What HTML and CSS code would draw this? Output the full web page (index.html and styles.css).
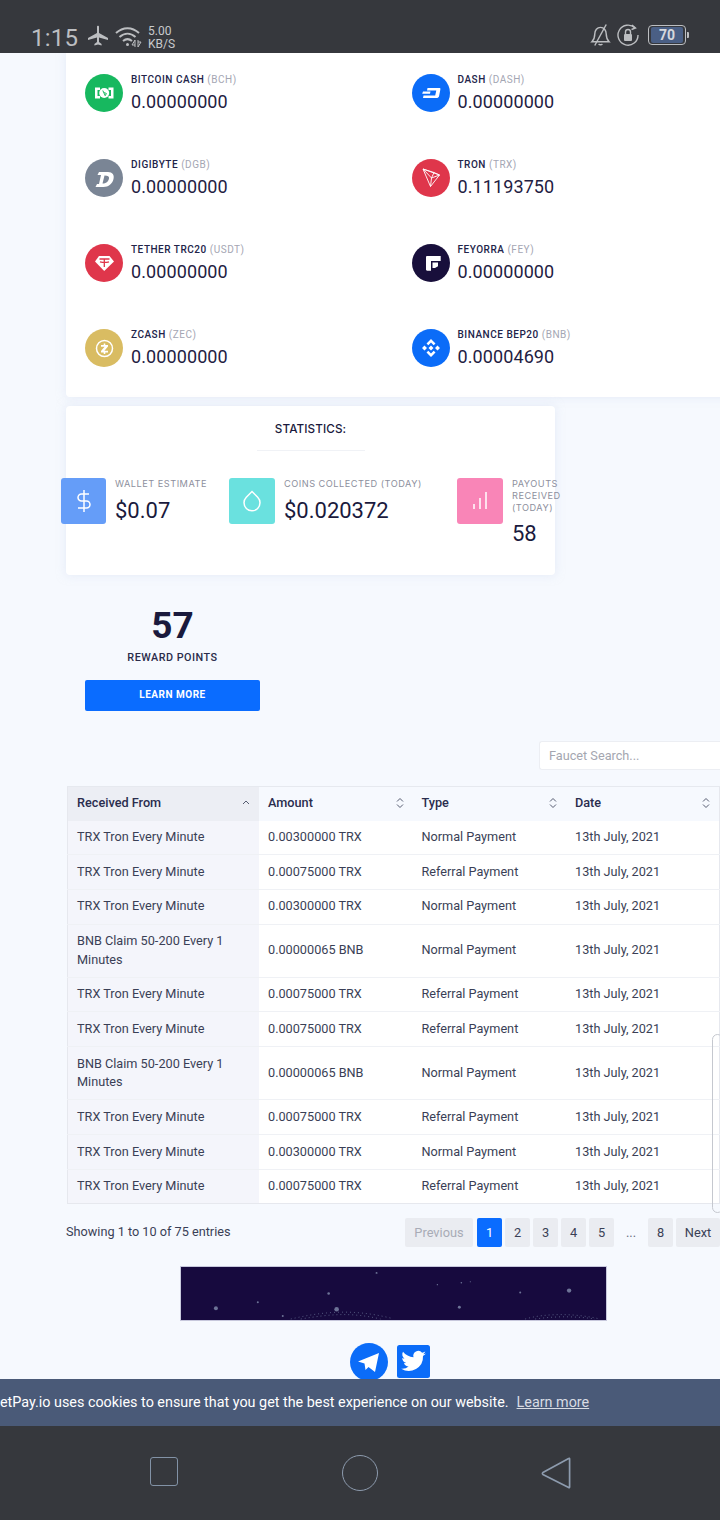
FILE: index.html
```html
<!DOCTYPE html>
<html lang="en">
<head>
    <meta charset="UTF-8">
    <meta name="viewport" content="width=device-width, initial-scale=1.0">
    <title>FaucetPay</title>
    <link rel="stylesheet" href="styles.css">
</head>
<body>
    <div class="status-bar">
        <div class="status-left">
            <span class="clock">1:15</span>
            <svg class="ic-plane" viewBox="0 0 22 22"><path d="M10 1.500c0-1 2-1 2 0V8l9 5v2l-9-2.600V17l2.600 2v1.600L11 19.500l-3.600 1.100V19L10 17v-4.600L1 15v-2l9-5z" fill="#bcbec1"/></svg>
            <svg class="ic-wifi" viewBox="0 0 28 24" fill="none" stroke="#bcbec1" stroke-width="2"><path d="M1 8c7-6.500 16-6.500 23 0"/><path d="M4.500 12c5-4.500 11-4.500 16 0"/><path d="M8 16c3-2.500 6-2.500 9 0"/><circle cx="12.500" cy="19.500" r="1.500" fill="#bcbec1" stroke="none"/><path d="M20 22v-7l-3 5h3M23 15v7l3-5h-3" stroke-width="1"/></svg>
            <span class="speed">5.00<br>KB/S</span>
        </div>
        <div class="status-right">
            <svg class="ic-bell" viewBox="0 0 22 24" fill="none" stroke="#bcbec1" stroke-width="1.500"><path d="M2 19c2-2 3-4 3-8s2.500-7 6-7 6 3 6 7 1 6 3 8z"/><path d="M9 21.500c1 1 3 1 4 0"/><path d="M17 1L5 23"/></svg>
            <svg class="ic-lock" viewBox="0 0 22 24" fill="none" stroke="#bcbec1" stroke-width="1.400"><path d="M18 5a10 10 0 1 0 3 7"/><path d="M15 2l3.500 3-4 1.500"/><rect x="7" y="11" width="8" height="7" rx="1" fill="#bcbec1" stroke="none"/><path d="M8.500 11V9a2.500 2.500 0 0 1 5 0v2"/></svg>
            <div class="battery"><span class="battery-level">70</span></div>
            <span class="battery-tip"></span>
        </div>
    </div>

    <div class="page">
        <div class="card coins">
            <div class="coin">
                <svg class="coin-icon" viewBox="0 0 38 38"><circle cx="19" cy="19" r="19" fill="#17b85f"/><path d="M10 13.500h5v2.500h-2.500v6h2.500v2.500h-5zM28.500 13.500h-5V16H26v6h-2.500v2.500h5z" fill="#fff"/><circle cx="19.200" cy="19" r="5" fill="#fff"/><path d="M17.800 16.500l2.400 5.200 1.200-2.200-2.200-1" fill="none" stroke="#17b85f" stroke-width="1"/></svg>
                <div>
                    <div class="coin-name">BITCOIN CASH <span>(BCH)</span></div>
                    <div class="coin-value">0.00000000</div>
                </div>
            </div>
            <div class="coin">
                <svg class="coin-icon" viewBox="0 0 38 38"><circle cx="19" cy="19" r="19" fill="#0b6cf8"/><path d="M15.500 14h12c.7 0 1 .5.900 1.200l-1.300 6.800c-.2.900-.9 2-2 2H11l.5-2.400h11.700l1.100-5.200H15zM11 17.600h7.500l-.5 2.200h-7.800z" fill="#fff"/></svg>
                <div>
                    <div class="coin-name">DASH <span>(DASH)</span></div>
                    <div class="coin-value">0.00000000</div>
                </div>
            </div>
            <div class="coin">
                <svg class="coin-icon" viewBox="0 0 38 38"><circle cx="19" cy="19" r="19" fill="#7a8595"/><path fill-rule="evenodd" d="M14 13h9c4.500 0 6.500 3 5.500 7-1 4.500-5 8-10 8h-8l1.500-3h2l2-9h-3.500zm5.500 3.500l-2 8c3.500 0 6-2 6.500-5 .4-2-1-3-4.500-3z" fill="#fff"/></svg>
                <div>
                    <div class="coin-name">DIGIBYTE <span>(DGB)</span></div>
                    <div class="coin-value">0.00000000</div>
                </div>
            </div>
            <div class="coin">
                <svg class="coin-icon" viewBox="0 0 38 38"><circle cx="19" cy="19" r="19" fill="#df364b"/><path d="M11 10l16.500 6L18.500 27.500zM11 10l8.500 9-1 8.500M19.500 19l8-3M11 10l11 3.500 5.500 2.500M22 13.500L19.500 19" fill="none" stroke="#fff" stroke-width=".9" stroke-linejoin="round"/></svg>
                <div>
                    <div class="coin-name">TRON <span>(TRX)</span></div>
                    <div class="coin-value">0.11193750</div>
                </div>
            </div>
            <div class="coin">
                <svg class="coin-icon" viewBox="0 0 38 38"><circle cx="19" cy="19" r="19" fill="#df364b"/><path d="M14 12h10.500l4.500 5.500L19.200 27 10 17.500z" fill="#fff"/><path d="M14.500 15h10M19.300 15v8M15 17.800c3 .8 6.500.8 9 0" fill="none" stroke="#df364b" stroke-width="1.300"/></svg>
                <div>
                    <div class="coin-name">TETHER TRC20 <span>(USDT)</span></div>
                    <div class="coin-value">0.00000000</div>
                </div>
            </div>
            <div class="coin">
                <svg class="coin-icon" viewBox="0 0 38 38"><circle cx="19" cy="19" r="19" fill="#180f3b"/><path d="M14 13.200c0-.8.500-1.200 1.200-1.200H28.700v5H19v9.700h-3.800c-.7 0-1.200-.5-1.200-1.200zM20.500 18.500h5.500v3.800l-3 1.800h-2.500z" fill="#fff"/></svg>
                <div>
                    <div class="coin-name">FEYORRA <span>(FEY)</span></div>
                    <div class="coin-value">0.00000000</div>
                </div>
            </div>
            <div class="coin">
                <svg class="coin-icon" viewBox="0 0 38 38"><circle cx="19" cy="19" r="19" fill="#d9bc62"/><circle cx="19.500" cy="19.500" r="8" fill="none" stroke="#fff" stroke-width="1.500"/><path d="M18.700 14.500h1.600v1.500h2.700v1.600l-3.600 4.200H23v1.700h-2.700V25h-1.600v-1.500H16v-1.600l3.600-4.200H16V16h2.700z" fill="#fff"/></svg>
                <div>
                    <div class="coin-name">ZCASH <span>(ZEC)</span></div>
                    <div class="coin-value">0.00000000</div>
                </div>
            </div>
            <div class="coin">
                <svg class="coin-icon" viewBox="0 0 38 38"><circle cx="19" cy="19" r="19" fill="#0b6cf8"/><path d="M19 10l4.500 4.500-1.800 1.800L19 13.600l-2.700 2.700-1.800-1.800zM12.500 16.500L15 19l-2.500 2.500L10 19zM25.500 16.500L28 19l-2.500 2.500L23 19zM19 16.500l2.500 2.500-2.500 2.500-2.500-2.500zM14.500 23.500l1.800-1.800 2.700 2.700 2.700-2.700 1.800 1.800L19 28z" fill="#fff"/></svg>
                <div>
                    <div class="coin-name">BINANCE BEP20 <span>(BNB)</span></div>
                    <div class="coin-value">0.00004690</div>
                </div>
            </div>
        </div>

        <div class="card stats">
            <h3 class="stats-title">STATISTICS:</h3>
            <div class="stats-rule"></div>
            <div class="stats-row">
                <div class="stat">
                    <div class="stat-icon blue">
                        <svg viewBox="0 0 24 24" fill="none" stroke="#fff" stroke-width="1.500"><path d="M12 1v22M17 5H9.500a3.500 3.500 0 0 0 0 7h5a3.500 3.500 0 0 1 0 7H6"/></svg>
                    </div>
                    <div>
                        <div class="stat-label">WALLET ESTIMATE</div>
                        <div class="stat-value">$0.07</div>
                    </div>
                </div>
                <div class="stat">
                    <div class="stat-icon teal">
                        <svg viewBox="0 0 24 24" fill="none" stroke="#fff" stroke-width="1.500"><path d="M12 2.500l5.700 5.700a8 8 0 1 1-11.400 0z"/></svg>
                    </div>
                    <div>
                        <div class="stat-label">COINS COLLECTED (TODAY)</div>
                        <div class="stat-value">$0.020372</div>
                    </div>
                </div>
                <div class="stat">
                    <div class="stat-icon pink">
                        <svg viewBox="0 0 24 24" fill="none" stroke="#fff" stroke-width="1.500"><path d="M6 20v-5M12 20V9M18 20V3"/></svg>
                    </div>
                    <div>
                        <div class="stat-label narrow">PAYOUTS RECEIVED (TODAY)</div>
                        <div class="stat-value spaced">58</div>
                    </div>
                </div>
            </div>
        </div>

        <div class="reward">
            <div class="reward-num">57</div>
            <div class="reward-label">REWARD POINTS</div>
            <a class="reward-btn">LEARN MORE</a>
        </div>

        <div class="search-row">
            <input class="search" type="text" placeholder="Faucet Search...">
        </div>

        <table class="payouts">
            <colgroup><col class="c1"><col class="c2"><col class="c2"><col class="c2"></colgroup>
            <thead>
                <tr>
                    <th class="sorted"><div class="th-in">Received From <svg class="sort" viewBox="0 0 8 12" fill="none" stroke="#555b70"><path d="M1 7l3-3 3 3"/></svg></div></th>
                    <th><div class="th-in">Amount <svg class="sort" viewBox="0 0 8 12" fill="none" stroke="#555b70"><path d="M1 4.500L4 1.500l3 3M1 7.500l3 3 3-3"/></svg></div></th>
                    <th><div class="th-in">Type <svg class="sort" viewBox="0 0 8 12" fill="none" stroke="#555b70"><path d="M1 4.500L4 1.500l3 3M1 7.500l3 3 3-3"/></svg></div></th>
                    <th><div class="th-in">Date <svg class="sort" viewBox="0 0 8 12" fill="none" stroke="#555b70"><path d="M1 4.500L4 1.500l3 3M1 7.500l3 3 3-3"/></svg></div></th>
                </tr>
            </thead>
            <tbody>
                <tr><td>TRX Tron Every Minute</td><td>0.00300000 TRX</td><td>Normal Payment</td><td>13th July, 2021</td></tr>
                <tr><td>TRX Tron Every Minute</td><td>0.00075000 TRX</td><td>Referral Payment</td><td>13th July, 2021</td></tr>
                <tr><td>TRX Tron Every Minute</td><td>0.00300000 TRX</td><td>Normal Payment</td><td>13th July, 2021</td></tr>
                <tr><td>BNB Claim 50-200 Every 1 Minutes</td><td>0.00000065 BNB</td><td>Normal Payment</td><td>13th July, 2021</td></tr>
                <tr><td>TRX Tron Every Minute</td><td>0.00075000 TRX</td><td>Referral Payment</td><td>13th July, 2021</td></tr>
                <tr><td>TRX Tron Every Minute</td><td>0.00075000 TRX</td><td>Referral Payment</td><td>13th July, 2021</td></tr>
                <tr><td>BNB Claim 50-200 Every 1 Minutes</td><td>0.00000065 BNB</td><td>Normal Payment</td><td>13th July, 2021</td></tr>
                <tr><td>TRX Tron Every Minute</td><td>0.00075000 TRX</td><td>Referral Payment</td><td>13th July, 2021</td></tr>
                <tr><td>TRX Tron Every Minute</td><td>0.00300000 TRX</td><td>Normal Payment</td><td>13th July, 2021</td></tr>
                <tr><td>TRX Tron Every Minute</td><td>0.00075000 TRX</td><td>Referral Payment</td><td>13th July, 2021</td></tr>
            </tbody>
        </table>

        <div class="table-foot">
            <div class="entries">Showing 1 to 10 of 75 entries</div>
            <div class="pager">
                <a class="pg prev">Previous</a>
                <a class="pg num active">1</a>
                <a class="pg num">2</a>
                <a class="pg num">3</a>
                <a class="pg num">4</a>
                <a class="pg num">5</a>
                <span class="pg-dots">...</span>
                <a class="pg num">8</a>
                <a class="pg next">Next</a>
            </div>
        </div>

        <svg class="banner" viewBox="0 0 426 54" preserveAspectRatio="none">
            <rect width="426" height="54" fill="#170a3e"/>
            <g fill="#6d7396">
                <circle cx="35" cy="42" r="2"/><circle cx="77" cy="36" r="1"/><circle cx="196" cy="6" r="1"/>
                <circle cx="148" cy="27" r="1.300"/><circle cx="156" cy="43" r="2.300"/><circle cx="257" cy="18" r=".7"/>
                <circle cx="281" cy="16" r=".8"/><circle cx="290" cy="15" r=".6"/><circle cx="279" cy="41" r="1.500"/>
                <circle cx="340" cy="26" r="1"/><circle cx="389" cy="24" r="2.200"/><circle cx="102" cy="50" r="1"/>
            </g>
            <path d="M110 53c30-7 60-11 100-1M120 53c30-5 50-7 80 0M345 53c20-6 50-6 75 0M355 53c20-3 40-3 60 0" fill="none" stroke="#53587e" stroke-dasharray="1 3"/>
        </svg>

        <div class="socials">
            <svg class="tg" viewBox="0 0 38 38"><circle cx="19" cy="19" r="19" fill="#0b6cf8"/><path d="M8 18.500L29 10l-4 19-6.500-5-3 3-1-6.500zM14.500 20.500l8-5-5.500 6.500" fill="#fff"/></svg>
            <svg class="tw" viewBox="0 0 33 33"><rect width="33" height="33" rx="2.500" fill="#0b6cf8"/><path d="M29 8.500c-.9.400-1.900.7-2.900.8 1-.6 1.800-1.600 2.200-2.800-1 .6-2 1-3.200 1.200a5 5 0 0 0-8.600 4.600C12.300 12 8.600 10 6 6.800c-1.400 2.400-.7 5.300 1.500 6.800-.8 0-1.600-.2-2.300-.6 0 2.400 1.700 4.500 4 5-.7.200-1.500.2-2.300.1.700 2 2.500 3.400 4.700 3.500A10 10 0 0 1 4.200 23.700 14.200 14.200 0 0 0 26 11c1.200-.7 2.200-1.500 3-2.500z" fill="#fff"/></svg>
        </div>

        <div class="scroll-thumb"></div>

        <div class="cookie-bar">
            <span class="cookie-text">etPay.io uses cookies to ensure that you get the best experience on our website.</span>
            <a class="cookie-link">Learn more</a>
        </div>
    </div>

    <div class="nav-bar">
        <span class="nav-square"></span>
        <span class="nav-circle"></span>
        <svg class="nav-back" viewBox="0 0 32 36" fill="none" stroke="#8d9bae" stroke-width="1.800" stroke-linejoin="round"><path d="M29.500 2.500c.6-.4 1-.2 1 .5v30c0 .7-.4.900-1 .5L2 19.500c-.7-.6-.7-1.400 0-2z"/></svg>
    </div>
</body>
</html>
```

FILE: styles.css
```css
* {
    box-sizing: border-box;
}
html, body {
    margin: 0;
    height: 100%;
}
body {
    width: 720px;
    height: 1520px;
    display: flex;
    flex-direction: column;
    overflow: hidden;
    font-family: Roboto, sans-serif;
    color: #1a1a3d;
    background: #f6f9fe;
}

/* phone chrome */
.status-bar {
    height: 53px;
    flex: none;
    display: flex;
    justify-content: space-between;
    align-items: flex-end;
    padding: 0 31px 0 31px;
    background: #36383d;
    color: #bcbec1;
}
.status-left, .status-right {
    display: flex;
    align-items: center;
}
.status-right {
    padding-bottom: 6px;
}
.clock {
    font-size: 24px;
    letter-spacing: 0.2px;
    line-height: 30px;
}
.ic-plane { width: 22px; height: 22px; margin: 0 0 4px 9px; }
.ic-wifi { width: 28px; height: 24px; margin: 0 0 3px 6px; }
.speed {
    font-size: 12px;
    line-height: 13px;
    margin-left: 5px;
    color: #c8cacc;
}
.ic-bell { width: 21px; height: 24px; }
.ic-lock { width: 22px; height: 24px; margin-left: 6px; }
.battery {
    width: 38px;
    height: 20px;
    margin-left: 9px;
    border: 1px solid #bcbec1;
    border-radius: 4px;
    padding: 1px;
}
.battery-level {
    display: block;
    width: 32px;
    height: 16px;
    border-radius: 2px;
    background: #4a5f85;
    color: #d5d8dd;
    font-size: 14px;
    font-weight: 700;
    line-height: 16px;
    text-align: center;
    margin-left: 1px;
}
.battery-tip {
    width: 2px;
    height: 6px;
    background: #bcbec1;
    margin-left: 1px;
    border-radius: 0 1px 1px 0;
}
.nav-bar {
    height: 94px;
    flex: none;
    display: flex;
    align-items: center;
    background: #36383d;
    padding: 0 149px 0 150px;
    justify-content: space-between;
}
.nav-square {
    width: 28px;
    height: 29px;
    margin-bottom: 3px;
    border: 1.500px solid #8292a6;
    border-radius: 3px;
}
.nav-circle {
    width: 36px;
    height: 36px;
    border: 1.500px solid #8d9bae;
    border-radius: 50%;
}
.nav-back {
    width: 30px;
    height: 36px;
}

/* page */
.page {
    position: relative;
    flex: 1;
    overflow: hidden;
}
.card {
    background: #fff;
    box-shadow: 0 0 10px rgba(210, 220, 240, 0.5);
}
.coins {
    margin-left: 66px;
    width: 700px;
    height: 344px;
    padding: 21px 0 0 19px;
    display: grid;
    grid-template-columns: 326.500px 327px;
    grid-auto-rows: 85px;
    border-radius: 0 0 4px 4px;
}
.coin {
    display: flex;
    gap: 8px;
}
.coin-icon {
    width: 38px;
    height: 38px;
    flex: none;
}
.coin-name {
    font-size: 10px;
    font-weight: 500;
    letter-spacing: 0.52px;
    line-height: 12px;
    color: #22244a;
}
.coin-name span {
    font-weight: 400;
    color: #a4a6b3;
}
.coin-value {
    font-size: 18px;
    letter-spacing: 0.1px;
    line-height: 24px;
    margin-top: 4px;
    color: #1f2142;
}

.stats {
    margin: 9px 0 0 66px;
    width: 489px;
    height: 169px;
    border-radius: 4px;
    padding-top: 16px;
}
.stats-title {
    margin: 0;
    text-align: center;
    font-family: Inter, sans-serif;
    font-size: 11.700px;
    font-weight: 500;
    line-height: 15px;
    letter-spacing: 0.1px;
}
.stats-rule {
    width: 108px;
    height: 1px;
    margin: 13px auto 0;
    background: #f0f2f6;
}
.stats-row {
    display: grid;
    grid-template-columns: 168px 228px 100px;
    margin: 27px 0 0 -5px;
}
.stat {
    display: flex;
    gap: 9px;
}
.stat-icon {
    width: 46px;
    height: 46px;
    flex: none;
    border-radius: 3px;
    display: flex;
    align-items: center;
    justify-content: center;
}
.stat-icon svg { width: 24px; height: 24px; }
.blue { background: #659df8; width: 45px; }
.teal { background: #6ae1df; }
.pink { background: #f985b7; }
.stat-label {
    font-family: Inter, sans-serif;
    font-size: 9.200px;
    letter-spacing: 0.5px;
    line-height: 12px;
    color: #8d8f9d;
}
.stat-label.narrow { width: 50px; }
.stat-value {
    font-size: 22px;
    line-height: 28px;
    margin-top: 7px;
}
.stat-value.spaced { margin-top: 6px; }

.reward {
    width: 175px;
    margin: 32px 0 0 85px;
    text-align: center;
}
.reward-num {
    font-size: 37px;
    font-weight: 700;
    line-height: 38px;
}
.reward-label {
    font-size: 10.800px;
    font-weight: 500;
    letter-spacing: 0.5px;
    line-height: 14px;
    margin-top: 6px;
    color: #2a2c4a;
}
.reward-btn {
    display: block;
    height: 31px;
    margin-top: 15px;
    background: #0a6cff;
    border-radius: 2px;
    color: #fff;
    font-size: 10px;
    font-weight: 700;
    letter-spacing: 0.5px;
    line-height: 29px;
}

.search-row {
    display: flex;
    justify-content: flex-end;
    margin-top: 30px;
}
.search {
    width: 181px;
    height: 29px;
    border: 1px solid #eceef3;
    border-right: 0;
    border-radius: 3px 0 0 3px;
    padding: 0 9px;
    font-family: Roboto, sans-serif;
    font-size: 12.700px;
    background: #fff;
}
.search::placeholder { color: #a4a6b0; }

.payouts {
    margin: 16px 0 0 67px;
    width: 653px;
    table-layout: fixed;
    border-collapse: collapse;
    font-size: 12.700px;
    color: #3a3f56;
    background: #fff;
    border-bottom: 1px solid #e6e8ee;
    border-right: 1px solid #e6e8ee;
    border-left: 1px solid #e6e8ee;
}
.c1 { width: 191.500px; }
.c2 { width: 153.500px; }
.payouts th {
    height: 34px;
    padding: 0 9px 2px 9px;
    text-align: left;
    font-weight: 500;
    color: #2a2d4e;
    background: #f6f9fe;
    border-top: 1px solid #e6e9ef;
}
.payouts th.sorted { background: #eceef4; }
.th-in {
    display: flex;
    align-items: center;
    justify-content: space-between;
}
.sort { width: 8px; height: 12px; flex: none; }
.payouts td {
    padding: 7.600px 9px;
    line-height: 18.500px;
    border-top: 1px solid #eff1f5;
}
.payouts td:first-child {
    background: #f4f5fb;
}
.payouts tbody tr:first-child td { border-top: 0; }

.table-foot {
    display: flex;
    justify-content: space-between;
    align-items: center;
    margin-top: 13px;
    padding-left: 66px;
    height: 30px;
}
.entries {
    font-size: 12.700px;
    color: #3a3f56;
    margin-bottom: 2px;
}
.pager {
    display: flex;
    flex: none;
    gap: 3px;
    font-size: 12.800px;
    width: 315px;
}
.pg {
    flex: none;
    height: 29px;
    line-height: 29px;
    text-align: center;
    background: #eaecf1;
    color: #3a3f56;
    border-radius: 2px;
}
.num { width: 25px; }
.prev {
    width: 68px;
    margin-right: 1px;
    color: #a8abb6;
}
.next { width: 44px; }
.active { background: #0a6cff; color: #fff; }
.pg-dots {
    flex: none;
    width: 28px;
    line-height: 29px;
    text-align: center;
    color: #6a6e80;
}

.banner {
    display: block;
    width: 427px;
    height: 55px;
    margin: 19px 0 0 180px;
    border: 1px solid #c7c8dc;
}
.socials {
    display: flex;
    align-items: flex-start;
    gap: 9px;
    margin: 22px 0 0 350px;
}
.tg { width: 38px; height: 38px; flex: none; }
.tw { width: 33px; height: 33px; flex: none; margin-top: 2px; }

.scroll-thumb {
    position: absolute;
    right: -3px;
    top: 981px;
    width: 11px;
    height: 179px;
    border: 1px solid #c5c8cf;
    border-radius: 6px;
}
.cookie-bar {
    position: absolute;
    left: 0;
    right: 0;
    bottom: 0;
    height: 47px;
    display: flex;
    align-items: center;
    background: #4a5a78;
    color: #fff;
    font-size: 14.350px;
    white-space: nowrap;
}
.cookie-text { flex: none; }
.cookie-link {
    flex: none;
    margin-left: 8px;
    color: #d8dce4;
    text-decoration: underline;
}
```
